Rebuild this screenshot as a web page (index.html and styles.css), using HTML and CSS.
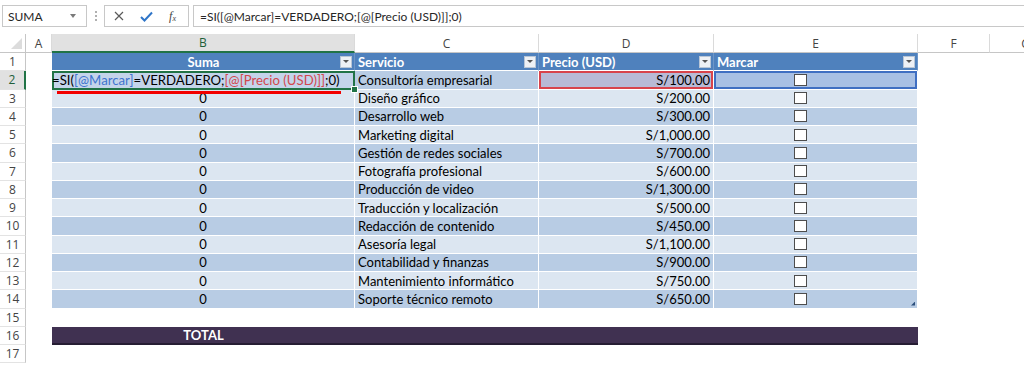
FILE: index.html
```html
<!DOCTYPE html>
<html lang="es">
<head>
<meta charset="utf-8">
<title>Excel</title>
<link rel="stylesheet" href="styles.css">
</head>
<body>
<div class="app">
  <div class="fbar">
    <div class="namebox"><span>SUMA</span><span class="nb-arrow"></span></div>
    <div class="vdots"><i></i><i></i><i></i></div>
    <div class="fbtns">
      <svg width="10" height="10" viewBox="0 0 10 10"><path d="M1 1 L9 9 M9 1 L1 9" stroke="#5a5a5a" stroke-width="1.2" fill="none"/></svg>
      <svg width="13" height="11" viewBox="0 0 13 11"><path d="M1 6 L4.5 9.5 L12 1.5" stroke="#2f75c8" stroke-width="2" fill="none"/></svg>
      <span class="fx">f<sub>x</sub></span>
    </div>
    <div class="finput">=SI([@Marcar]=VERDADERO;[@[Precio (USD)]];0)</div>
  </div>

  <div class="sheet">
    <div class="row">
      <div class="corner"></div>
      <div class="ch">A</div>
      <div class="ch sel">B</div>
      <div class="ch">C</div>
      <div class="ch">D</div>
      <div class="ch">E</div>
      <div class="ch">F</div>
      <div class="ch">G</div>
    </div>

    <div class="row">
      <div class="rh">1</div><div class="c"></div>
      <div class="th center"><span class="lbl">Suma</span><span class="dd"></span></div>
      <div class="th"><span class="lbl">Servicio</span><span class="dd"></span></div>
      <div class="th"><span class="lbl">Precio (USD)</span><span class="dd"></span></div>
      <div class="th"><span class="lbl">Marcar</span><span class="dd"></span></div>
      <div class="c"></div><div class="c"></div>
    </div>

    <div class="row dk">
      <div class="rh rsel">2</div><div class="c"></div>
      <div class="td edit"><span class="k">=SI(</span><span class="ref-b">[@Marcar]</span><span class="k">=VERDADERO;</span><span class="ref-r">[@[Precio (USD)]]</span><span class="k">;0)</span></div>
      <div class="td">Consultoría empresarial</div>
      <div class="td num hl-r">S/100.00</div>
      <div class="td chk hl-b"><span class="box"></span></div>
      <div class="c"></div><div class="c"></div>
    </div>

    <div class="row lt">
      <div class="rh">3</div><div class="c"></div>
      <div class="td b">0</div><div class="td">Diseño gráfico</div><div class="td num">S/200.00</div><div class="td chk"><span class="box"></span></div>
      <div class="c"></div><div class="c"></div>
    </div>
    <div class="row dk">
      <div class="rh">4</div><div class="c"></div>
      <div class="td b">0</div><div class="td">Desarrollo web</div><div class="td num">S/300.00</div><div class="td chk"><span class="box"></span></div>
      <div class="c"></div><div class="c"></div>
    </div>
    <div class="row lt">
      <div class="rh">5</div><div class="c"></div>
      <div class="td b">0</div><div class="td">Marketing digital</div><div class="td num">S/1,000.00</div><div class="td chk"><span class="box"></span></div>
      <div class="c"></div><div class="c"></div>
    </div>
    <div class="row dk">
      <div class="rh">6</div><div class="c"></div>
      <div class="td b">0</div><div class="td">Gestión de redes sociales</div><div class="td num">S/700.00</div><div class="td chk"><span class="box"></span></div>
      <div class="c"></div><div class="c"></div>
    </div>
    <div class="row lt">
      <div class="rh">7</div><div class="c"></div>
      <div class="td b">0</div><div class="td">Fotografía profesional</div><div class="td num">S/600.00</div><div class="td chk"><span class="box"></span></div>
      <div class="c"></div><div class="c"></div>
    </div>
    <div class="row dk">
      <div class="rh">8</div><div class="c"></div>
      <div class="td b">0</div><div class="td">Producción de video</div><div class="td num">S/1,300.00</div><div class="td chk"><span class="box"></span></div>
      <div class="c"></div><div class="c"></div>
    </div>
    <div class="row lt">
      <div class="rh">9</div><div class="c"></div>
      <div class="td b">0</div><div class="td">Traducción y localización</div><div class="td num">S/500.00</div><div class="td chk"><span class="box"></span></div>
      <div class="c"></div><div class="c"></div>
    </div>
    <div class="row dk">
      <div class="rh">10</div><div class="c"></div>
      <div class="td b">0</div><div class="td">Redacción de contenido</div><div class="td num">S/450.00</div><div class="td chk"><span class="box"></span></div>
      <div class="c"></div><div class="c"></div>
    </div>
    <div class="row lt">
      <div class="rh">11</div><div class="c"></div>
      <div class="td b">0</div><div class="td">Asesoría legal</div><div class="td num">S/1,100.00</div><div class="td chk"><span class="box"></span></div>
      <div class="c"></div><div class="c"></div>
    </div>
    <div class="row dk">
      <div class="rh">12</div><div class="c"></div>
      <div class="td b">0</div><div class="td">Contabilidad y finanzas</div><div class="td num">S/900.00</div><div class="td chk"><span class="box"></span></div>
      <div class="c"></div><div class="c"></div>
    </div>
    <div class="row lt">
      <div class="rh">13</div><div class="c"></div>
      <div class="td b">0</div><div class="td">Mantenimiento informático</div><div class="td num">S/750.00</div><div class="td chk"><span class="box"></span></div>
      <div class="c"></div><div class="c"></div>
    </div>
    <div class="row dk">
      <div class="rh">14</div><div class="c"></div>
      <div class="td b">0</div><div class="td">Soporte técnico remoto</div><div class="td num">S/650.00</div><div class="td chk last"><span class="box"></span></div>
      <div class="c"></div><div class="c"></div>
    </div>

    <div class="row">
      <div class="rh">15</div>
      <div class="c"></div><div class="c"></div><div class="c"></div><div class="c"></div><div class="c"></div><div class="c"></div><div class="c"></div>
    </div>
    <div class="row">
      <div class="rh">16</div><div class="c"></div>
      <div class="tot b">TOTAL</div><div class="tot"></div><div class="tot"></div><div class="tot"></div>
      <div class="c"></div><div class="c"></div>
    </div>
    <div class="row">
      <div class="rh">17</div>
      <div class="c"></div><div class="c"></div><div class="c"></div><div class="c"></div><div class="c"></div><div class="c"></div><div class="c"></div>
    </div>

    <div class="redline"></div>
  </div>
</div>
</body>
</html>
```

FILE: styles.css
```css
* { box-sizing: border-box; }

html, body {
  margin: 0;
  background: #ffffff;
  overflow: hidden;
}

.app {
  width: 1024px;
  height: 366px;
  overflow: hidden;
  font-family: "Lato", "Liberation Sans", sans-serif;
}

/* ---------- formula bar ---------- */
.fbar {
  height: 34px;
  display: flex;
  align-items: flex-start;
  padding: 5px 0 0 2px;
  font-family: "Lato", "Liberation Sans", sans-serif;
  font-size: 12px;
  color: #262626;
}

.namebox {
  width: 85px;
  height: 22px;
  border: 1px solid #c8c8c8;
  background: #fff;
  display: flex;
  align-items: center;
  justify-content: space-between;
  padding: 0 10px 0 5px;
}

.nb-arrow {
  width: 0;
  height: 0;
  border-left: 3px solid transparent;
  border-right: 3px solid transparent;
  border-top: 4px solid #7a7a7a;
}

.vdots {
  width: 17px;
  height: 22px;
  display: flex;
  flex-direction: column;
  align-items: center;
  justify-content: center;
  gap: 2px;
}
.vdots i {
  width: 2px;
  height: 2px;
  background: #b0b0b0;
  display: block;
}

.fbtns {
  width: 85px;
  height: 22px;
  border: 1px solid #c8c8c8;
  background: #fff;
  display: flex;
  align-items: center;
  justify-content: space-between;
  padding: 0 12px 0 9px;
}

.fx {
  font-family: "Liberation Serif", serif;
  font-style: italic;
  font-size: 12px;
  color: #444;
}
.fx sub {
  font-size: 8px;
  vertical-align: -1px;
}

.finput {
  flex: 1;
  height: 22px;
  margin-left: 4px;
  border: 1px solid #c8c8c8;
  border-right: none;
  background: #fff;
  display: flex;
  align-items: center;
  padding-left: 6px;
}

/* ---------- sheet ---------- */
.sheet {
  position: relative;
  display: grid;
  grid-template-columns: 26px 26px 303px 184px 175px 204px 72px 72px;
  grid-template-rows: 19px repeat(17, 18.25px);
  width: max-content;
  font-size: 13px;
  color: #000;
}

.row { display: contents; }

.corner {
  position: relative;
  background: #fff;
  border-right: 1px solid #c6c6c6;
  border-bottom: 1px solid #c6c6c6;
}
.corner::after {
  content: "";
  position: absolute;
  right: 3px;
  bottom: 3px;
  width: 11px;
  height: 11px;
  background: #dcdcdc;
  clip-path: polygon(100% 0, 100% 100%, 0 100%);
}

.ch {
  background: #fff;
  color: #444;
  font-family: "Open Sans", "Liberation Sans", sans-serif;
  font-size: 12px;
  display: flex;
  align-items: center;
  justify-content: center;
  border-right: 1px solid #dadada;
  border-bottom: 1px solid #c6c6c6;
}
.ch.sel {
  background: #e1e1e1;
  color: #1f5f3a;
  border-bottom: 2px solid #217346;
}

.rh {
  background: #fff;
  color: #444;
  font-family: "Open Sans", "Liberation Sans", sans-serif;
  font-size: 12px;
  display: flex;
  align-items: center;
  justify-content: center;
  border-right: 1px solid #c6c6c6;
  border-bottom: 1px solid #e3e3e3;
}
.rh.rsel {
  background: #e1e1e1;
  color: #1f5f3a;
  border-right: 2px solid #217346;
}

.c { background: #fff; }

/* table header */
.th {
  background: #4f81bd;
  color: #fff;
  font-weight: 700;
  display: flex;
  align-items: center;
  padding: 0 2px 0 3px;
  border-right: 1px solid #6d96c8;
  border-bottom: 1px solid #fff;
}
.th .lbl { flex: 1; }
.th.center .lbl { text-align: center; padding-left: 12px; }

.dd {
  width: 12px;
  height: 12px;
  background: #eef1f5;
  border: 1px solid #b9c6d6;
  display: flex;
  align-items: center;
  justify-content: center;
}
.dd::after {
  content: "";
  width: 0;
  height: 0;
  border-left: 3px solid transparent;
  border-right: 3px solid transparent;
  border-top: 3px solid #555;
}

/* table body */
.td {
  display: flex;
  align-items: center;
  padding: 0 3px;
  border-right: 1px solid #fff;
  border-bottom: 1px solid #fff;
  white-space: nowrap;
}
.dk .td { background: #b8cce4; }
.lt .td { background: #dce6f1; }

.td.b { justify-content: center; }
.td.num { justify-content: flex-end; }
.td.chk { padding-left: 80px; position: relative; }

.box {
  width: 13px;
  height: 12px;
  background: #fff;
  border: 1px solid #4d4d4d;
}

.td.edit {
  position: relative;
  padding: 0;
  font-size: 13.2px;
  background: #c4d4ea;
  box-shadow: inset 0 0 0 2px #217346;
  border: none;
  overflow: visible;
}
.td.edit::after {
  content: "";
  position: absolute;
  right: -3px;
  bottom: -3px;
  width: 5px;
  height: 5px;
  background: #217346;
  border: 1px solid #fff;
}
.k { color: #000; }
.ref-b { color: #3f74cf; }
.ref-r { color: #d2484d; }

.dk .td.hl-r {
  background: #b8bad6;
  box-shadow: inset 0 0 0 2px #d8434b;
}
.dk .td.hl-b {
  background: #a8c0e4;
  box-shadow: inset 0 0 0 2px #3f6fc2;
}

.td.last::after {
  content: "";
  position: absolute;
  right: 2px;
  bottom: 2px;
  width: 4px;
  height: 4px;
  background: #2c4f7c;
  clip-path: polygon(100% 0, 100% 100%, 0 100%);
}

/* total */
.tot {
  background: #403151;
  border-bottom: 2px solid #261d33;
  color: #fff;
  font-weight: 700;
  display: flex;
  align-items: center;
}
.tot.b { justify-content: center; }

.redline {
  position: absolute;
  left: 57px;
  top: 57px;
  width: 284px;
  height: 3px;
  background: #f20000;
}
```
